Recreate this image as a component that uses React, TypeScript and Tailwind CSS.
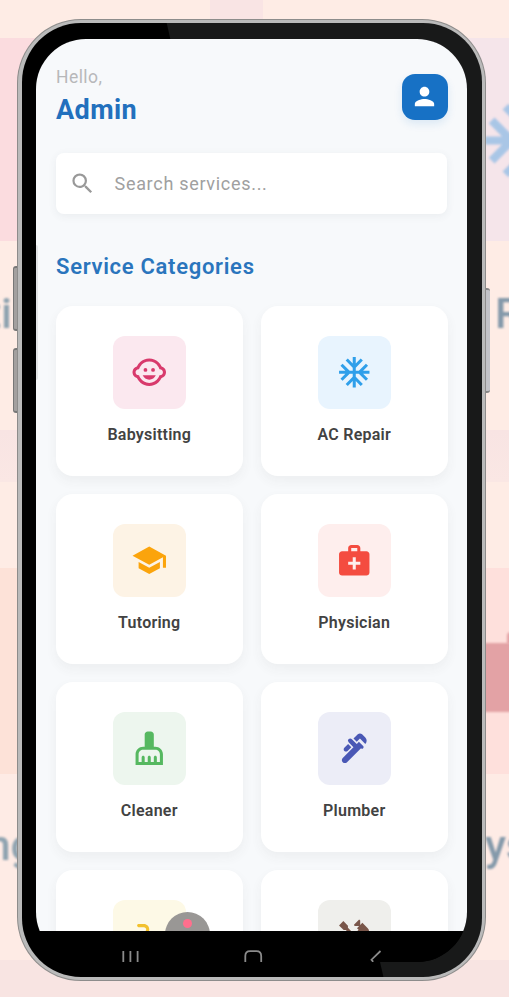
import type { ComponentType } from 'react';
import {
  MdAcUnit,
  MdCleaningServices,
  MdElectricalServices,
  MdHandyman,
  MdMedicalServices,
  MdPerson,
  MdPlumbing,
  MdSchool,
  MdSearch,
} from 'react-icons/md';

type Category = {
  name: string;
  Icon: ComponentType<{ className?: string }>;
  tile: string;
  color: string;
};

function BabyFace({ className }: { className?: string }) {
  return (
    <svg className={className} viewBox="0 0 24 24" fill="currentColor">
      <circle cx="14.5" cy="10.5" r="1.25" />
      <circle cx="9.5" cy="10.5" r="1.25" />
      <path d="M7.7 14c.76 1.77 2.39 2.9 4.3 2.9s3.54-1.13 4.3-2.9z" />
      <path d="M22.94 12.66c.04-.21.06-.43.06-.66s-.02-.45-.06-.66a4.008 4.008 0 0 0-2.81-3.17 9.114 9.114 0 0 0-2.19-2.91C16.36 3.85 14.28 3 12 3s-4.36.85-5.94 2.26c-.92.81-1.67 1.8-2.19 2.91a3.994 3.994 0 0 0-2.81 3.17c-.04.21-.06.43-.06.66s.02.45.06.66a4.008 4.008 0 0 0 2.81 3.17 8.977 8.977 0 0 0 2.17 2.89C7.62 20.14 9.71 21 12 21s4.38-.86 5.97-2.28c.9-.8 1.65-1.79 2.17-2.89a3.998 3.998 0 0 0 2.8-3.17zM19 14c-.1 0-.19-.02-.29-.03-.2.67-.49 1.29-.86 1.86C16.6 17.74 14.45 19 12 19s-4.6-1.26-5.85-3.17c-.37-.57-.66-1.19-.86-1.86-.1.01-.19.03-.29.03-1.1 0-2-.9-2-2s.9-2 2-2c.1 0 .19.02.29.03.2-.67.49-1.29.86-1.86C7.4 6.26 9.55 5 12 5s4.6 1.26 5.85 3.17c.37.57.66 1.19.86 1.86.1-.01.19-.03.29-.03 1.1 0 2 .9 2 2s-.9 2-2 2z" />
    </svg>
  );
}

const categories: Category[] = [
  { name: 'Babysitting', Icon: BabyFace, tile: 'bg-[#fbe8ef]', color: 'text-[#d83a6c]' },
  { name: 'AC Repair', Icon: MdAcUnit, tile: 'bg-[#e8f4fe]', color: 'text-[#2f9fea]' },
  { name: 'Tutoring', Icon: MdSchool, tile: 'bg-[#fdf3e5]', color: 'text-[#fba40c]' },
  { name: 'Physician', Icon: MdMedicalServices, tile: 'bg-[#feeeed]', color: 'text-[#f44c40]' },
  { name: 'Cleaner', Icon: MdCleaningServices, tile: 'bg-[#edf6ee]', color: 'text-[#56b860]' },
  { name: 'Plumber', Icon: MdPlumbing, tile: 'bg-[#ecedf7]', color: 'text-[#4a58b5]' },
  { name: 'Electrician', Icon: MdElectricalServices, tile: 'bg-[#fdf9e6]', color: 'text-[#f2c12e]' },
  { name: 'Handyman', Icon: MdHandyman, tile: 'bg-[#efefec]', color: 'text-[#79564a]' },
];

function Backdrop() {
  return (
    <div className="absolute inset-0 flex flex-col overflow-hidden">
      <div className="flex h-[38px] bg-[#feece5]">
        <div className="ml-[210px] w-[53px] bg-[#f9e4e4]" />
      </div>
      <div className="flex h-[203px]">
        <div className="w-[250px] bg-[#fbdcdf]" />
        <div className="flex-1 bg-[#f5e5ea]" />
      </div>
      <div className="h-[189px] bg-[#feece5]" />
      <div className="h-[52px] bg-gradient-to-b from-[#f8e4e3] to-[#fae7e4]" />
      <div className="h-[86px] bg-[#feece5]" />
      <div className="flex h-[206px]">
        <div className="w-[250px] bg-[#fde2d8]" />
        <div className="flex-1 bg-[#fee0dc]" />
      </div>
      <div className="h-[186px] bg-[#feebe5]" />
      <div className="flex-1 bg-[#f8e4e2]" />
      <MdAcUnit className="absolute top-[92px] left-[477px] size-[97px] text-[#a9c6e6] blur-[1px]" />
      <span className="absolute top-[288px] right-[497px] text-[43px] leading-[50px] font-medium text-[#8fa3b0] blur-[1px]">Babysitti</span>
      <span className="absolute top-[288px] left-[495px] text-[43px] leading-[50px] font-medium text-[#8499aa] blur-[1px]">Repair</span>
      <div className="absolute top-[643px] left-[480px] h-[69px] w-[60px] rounded bg-[#e3a2a5] blur-[1px]" />
      <div className="absolute top-[632px] left-[507px] h-3 w-8 rounded-tl bg-[#e3a2a5] blur-[1px]" />
      <span className="absolute top-[820px] right-[474px] text-[43px] leading-[50px] font-medium text-[#8fa3b0] blur-[1px]">Tutoring</span>
      <span className="absolute top-[820px] left-[485px] text-[43px] leading-[50px] font-medium text-[#8499aa] blur-[1px]">ysician</span>
    </div>
  );
}

function CategoryCard({ name, Icon, tile, color }: Category) {
  return (
    <div className="flex h-[170px] flex-col items-center rounded-[17px] bg-white pt-[30px] shadow-[0_5px_12px_rgba(60,70,60,0.06)]">
      <div className={`flex size-[73px] shrink-0 items-center justify-center rounded-[12px] ${tile}`}>
        <Icon className={`size-[36.5px] ${color}`} />
      </div>
      <span className="mt-[16px] text-[16px] leading-5 font-semibold tracking-[0.25px] whitespace-nowrap text-[#424242]">{name}</span>
    </div>
  );
}

function NavigationBar() {
  return (
    <div className="flex h-[31px] shrink-0 bg-black pt-[17px]">
      <svg className="ml-[85px] h-4 w-5" viewBox="0 0 20 16" fill="none" stroke="#8b8b8b" strokeWidth="1.8">
        <path d="M2.3 3v11M9.4 3v11M16.6 3v11" />
      </svg>
      <svg className="ml-[103px] h-4 w-5" viewBox="0 0 20 16" fill="none" stroke="#8b8b8b" strokeWidth="1.8">
        <path d="M1.3 14V8q0-4.8 4.8-4.8h6.3q4.8 0 4.8 4.8v6" />
      </svg>
      <svg className="ml-[105px] h-4 w-4" viewBox="0 0 16 16" fill="none" stroke="#8b8b8b" strokeWidth="1.8">
        <path d="M11.5 3 2.5 11.7l1.7 2.1" />
      </svg>
    </div>
  );
}

export default function App() {
  return (
    <div className="relative h-[997px] w-[509px] overflow-hidden font-['Roboto',sans-serif]">
      <Backdrop />
      <div className="absolute top-[266px] left-[12.5px] h-[65px] w-2 rounded-l-[3px] border-y-2 border-l border-[#777] bg-[#a3a09f]" />
      <div className="absolute top-[348px] left-[12.5px] h-[65px] w-2 rounded-l-[3px] border-y-2 border-l border-[#777] bg-[#a3a09f]" />
      <div className="absolute top-[288px] left-[482px] h-[105px] w-2 rounded-r-[3px] border-y-2 border-[#858585] bg-[#c3c3c8]" />

      <div className="relative mt-[19px] ml-[17px] h-[962px] w-[469px] rounded-[64px] bg-[#8d8c8b] p-px">
        <div className="h-full rounded-[63px] bg-[#bababa] p-[3.5px] pt-[2.5px]">
          <div className="h-full rounded-[59px] bg-[linear-gradient(77.2deg,#000_calc(50%+22px),#181919_calc(50%+23px))] pt-[16.5px] pl-[14px]">
            <div className="flex h-[923px] w-[431px] flex-col overflow-hidden rounded-[50px] bg-black">
              <main className="relative h-[892px] overflow-hidden bg-[#f7f9fb] pr-[19px] pl-[20.5px]">
                <header className="flex items-start justify-between pt-[27px]">
                  <div className="flex flex-col">
                    <span className="text-[17.5px] leading-[22px] tracking-[0.45px] text-[#b7b8ba]">Hello,</span>
                    <h1 className="mt-[6px] text-[27px] leading-8 font-bold tracking-[0.4px] text-[#2270bd]">Admin</h1>
                  </div>
                  <div className="mt-[7.5px] flex size-[46px] items-center justify-center rounded-[13px] bg-[#1771c5] shadow-[0_4px_8px_rgba(23,113,197,0.12)]">
                    <MdPerson className="size-[29px] text-white" />
                  </div>
                </header>

                <div className="mt-[27px] mr-[1px] flex h-[61px] items-center rounded-[8px] bg-white pl-[13px] shadow-[0_2px_8px_rgba(60,70,80,0.07)]">
                  <MdSearch className="size-[27px] text-[#999]" />
                  <span className="ml-[18.5px] text-[18px] leading-6 tracking-[0.7px] text-[#a0a0a0]">Search services...</span>
                </div>

                <h2 className="mt-[39px] text-[22px] leading-[28px] font-semibold tracking-[0.7px] text-[#2a75bd]">Service Categories</h2>

                <div className="mt-[25px] grid grid-cols-2 gap-x-[18.5px] gap-y-[18px]">
                  {categories.map((category) => (
                    <CategoryCard key={category.name} {...category} />
                  ))}
                </div>

                <div className="absolute top-[206px] left-0 h-[135px] w-[2.5px] rounded-r bg-[#e2e4e6]" />
                <div className="absolute top-[873px] left-[129.5px] flex size-[45px] justify-center rounded-full bg-[#999795] pt-[7px]">
                  <div className="size-[9px] rounded-full bg-[#ff6f8d]" />
                </div>
              </main>
              <NavigationBar />
            </div>
          </div>
        </div>
      </div>
    </div>
  );
}
